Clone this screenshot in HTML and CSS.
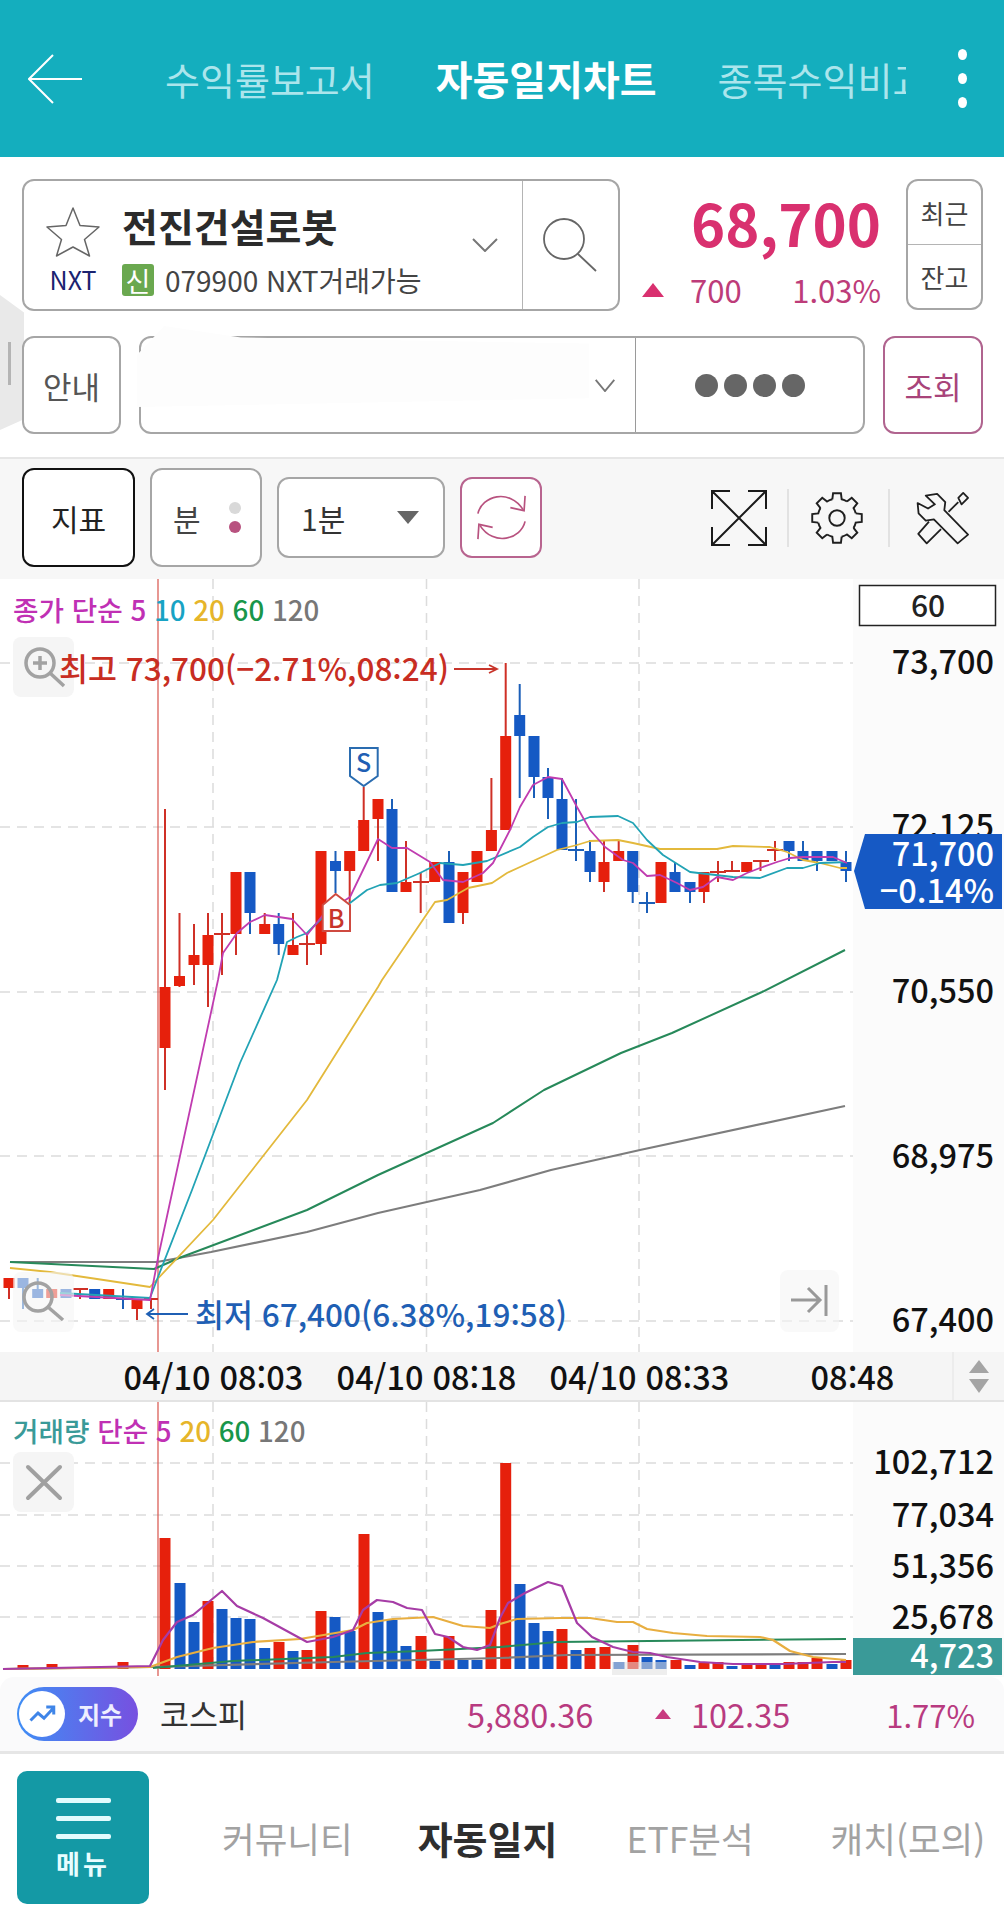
FILE: index.html
```html
<!DOCTYPE html>
<html lang="ko">
<head>
<meta charset="utf-8">
<title>자동일지차트</title>
<link rel="stylesheet" href="styles.css">
</head>
<body>
<div class="app">
  <header class="app-header">
    <svg class="back" viewBox="0 0 54 50"><path d="M54 25H1M25 1L1 25L25 49"/></svg>
    <nav class="tabs">
      <span class="tab">수익률보고서</span>
      <span class="tab tab-on">자동일지차트</span>
      <span class="tab">종목수익비교</span>
    </nav>
    <div class="kebab"><i></i><i></i><i></i></div>
  </header>

  <div class="side-handle"><i></i></div>

  <section class="stock-row">
    <div class="stock-box">
      <div class="stock-main">
        <svg class="star" viewBox="0 0 56 52"><path d="M28 2L35 19.500L54 21L39.500 33.500L44.500 50L28 41L11.500 50L16.500 33.500L2 21L21 19.500Z"/></svg>
        <div class="stock-name">전진건설로봇</div>
        <svg class="chev chev-a" viewBox="0 0 26 14"><path d="M1 1L13 13L25 1"/></svg>
        <div class="nxt">NXT</div>
        <div class="stock-meta"><span class="badge">신</span><span>079900 NXT거래가능</span></div>
      </div>
      <div class="stock-search">
        <svg viewBox="0 0 56 56"><circle cx="22" cy="22" r="20"/><path d="M36 37L54 54"/></svg>
      </div>
    </div>
    <div class="price-block">
      <div class="price">68,700</div>
      <div class="price-sub"><i class="tri tri-lg"></i><span class="diff">700</span><span class="pct">1.03%</span></div>
    </div>
    <div class="recent-box"><div>최근</div><div>잔고</div></div>
  </section>

  <section class="order-row">
    <div class="btn btn-info">안내</div>
    <div class="account">
      <div class="account-no">
        <i class="mask"></i>
        <svg class="chev chev-b" viewBox="0 0 22 14"><path d="M1 1L11 13L21 1"/></svg>
      </div>
      <div class="account-pw"><i></i><i></i><i></i><i></i></div>
    </div>
    <div class="btn btn-query">조회</div>
  </section>

  <section class="toolbar">
    <div class="tb tb-ind">지표</div>
    <div class="tb tb-min"><span>분</span><span class="dots"><i></i><i></i></span></div>
    <div class="tb tb-sel"><span>1분</span><i class="tri-down"></i></div>
    <div class="tb tb-ref">
      <svg viewBox="0 0 56 56"><path d="M4 24C8 6 36 -2 50 20"/><path d="M52 6L51 21L37 18"/><path d="M52 32C48 50 20 58 6 36"/><path d="M4 50L5 35L19 38"/></svg>
    </div>
    <div class="tb-icons">
      <svg class="ic-exp" viewBox="0 0 56 56"><path d="M1 19V1H19M37 1H55V19M1 37V55H19M37 55H55V37M1 1L55 55M55 1L1 55"/></svg>
      <i class="sep"></i>
      <svg class="ic-gear" viewBox="-28 -28 56 56">
        <circle r="8"/>
        <path id="tooth" d="M-4.840-19.400L-4.070-25.680H4.070L4.840-19.400A20 20 0 0 1 10.300-17.140"/>
        <use href="#tooth" transform="rotate(45)"/><use href="#tooth" transform="rotate(90)"/><use href="#tooth" transform="rotate(135)"/><use href="#tooth" transform="rotate(180)"/><use href="#tooth" transform="rotate(225)"/><use href="#tooth" transform="rotate(270)"/><use href="#tooth" transform="rotate(315)"/>
      </svg>
      <i class="sep"></i>
      <svg class="ic-tools" viewBox="672 28 172 172"><path d="M705 45L740 40L765 65L762 90L835 165L803 192L730 118L705 122L683 100L680 68L712 85L733 72Z"/><path d="M715 125L682 163L708 192L752 148"/><path d="M775 95L805 65"/><path d="M805 52L820 37L835 52L815 72Z"/></svg>
    </div>
  </section>

  <svg class="chart price-chart" viewBox="0 579 1004 773">
    <rect class="axis-bg" x="853" y="579" width="151" height="773"/>
    <path class="grid" d="M0 663H853M0 827H853M0 992H853M0 1156H853M0 1321H853M213 579V1352M426.500 579V1352M639 579V1352"/>
    <path class="cross" d="M158 579V1352"/>

    <rect class="ov-btn" x="13" y="637" width="61" height="60" rx="8"/>
    <g class="ov-ic"><circle cx="40" cy="663" r="14"/><path d="M50 673L64 686M33 663H47M40 656V670"/></g>

    <text class="legend" x="13" y="621"><tspan class="c-mag">종가 단순 5 </tspan><tspan class="c-cya">10 </tspan><tspan class="c-yel">20 </tspan><tspan class="c-grn">60 </tspan><tspan class="c-gry">120</tspan></text>

    <path class="wick-r" d="M165 809V1090M179.500 913V987M194 924V985M208 913V1007M222 913V975M214 934H230M236 934V955M264.700 913V934M293 913V955M307 934V965M299 944H315M321 944V955M349.700 871V903M363.700 787V851M378 819V861M406 841V882M420.700 872V913M413 882H429M463 913V924M491.400 778V830M505.700 663V736M604 840V892M618.700 840V851M704 892V903M718 861V882M710 872H726M732 861V871M724 871H740M760.500 861V871M753 861H769M775 841V861M767 850H783M9 1278V1299M80 1289V1299M73 1289H88M137 1300V1320M151 1299V1309M144 1299H158"/>
    <path class="body-r" d="M165 987V1048M179.500 976V986M194 955V965M208 935V965M236 872V934M264.700 924V934M293 945V955M321 851V944M349.700 851V871M363.700 820V851M378 799V819M406 882V892M434.700 862V882M463 872V913M477 851V882M491.400 830V851M505.700 736V830M604 862V882M618.700 851V861M661 862V903M704 872V892M746.700 862V872M9 1278V1288M51.700 1289V1298M108.700 1289V1299M137 1300V1309"/>
    <path class="wick-b" d="M250 913V934M278.700 913V955M335.500 851V893M392 799V809M449 851V862M519.700 684V798M534 777V798M548 768V819M562 778V799M576 799V861M568 850H584M590 840V882M632.700 892V903M647 892V913M639 903H655M675 862V872M690 892V903M789 851V861M803 841V851M817 861V871M846 851V882M23 1288V1309M37.700 1278V1289M123 1289V1309M116 1299H131"/>
    <path class="body-b" d="M250 872V913M278.700 924V944M335.500 861V871M392 809V892M449 862V923M519.700 715V736M534 736V777M548 777V798M562 799V850M590 851V872M632.700 851V892M675 872V892M690 882V892M789 841V851M803 851V861M817 851V861M832 851V861M846 862V871M23 1278V1288M37.700 1289V1298M66 1289V1298M94.700 1289V1299"/>

    <polyline class="ma s-gry" points="10,1262 157,1262 211,1252 307,1232 378,1213 480,1190 551,1170 640,1150 845,1106"/>
    <polyline class="ma s-grn" points="10,1262 154,1269 179,1258 307,1210 378,1175 493,1123 544,1090 621,1053 672,1033 762,992 845,950"/>
    <polyline class="ma s-yel" points="10,1268 50,1272 97,1279 150,1287 213,1220 307,1100 378,987 382,980 435,902 447,900 468,888 492,883 507,873 520,867 557,850 577,845 590,841 618,840 633,843 660,849 717,849 733,846 770,847 787,852 803,860 820,863 840,868 847,868"/>
    <polyline class="ma s-cya" points="60,1293 150,1298 158,1277 192,1190 240,1063 277,980 287,942 297,937 307,933 323,917 350,903 367,890 380,885 397,883 420,873 440,863 463,865 487,861 520,847 533,837 548,827 562,823 577,822 590,817 618,816 633,823 647,840 663,855 690,872 707,874 733,877 760,878 787,868 803,868 820,863 847,862"/>
    <polyline class="ma s-mag" points="60,1295 150,1300 158,1258 218,980 223,953 237,933 250,922 265,915 292,919 307,935 323,915 350,897 378,839 392,848 407,848 430,862 443,880 463,882 483,873 493,863 510,830 520,807 533,785 548,777 562,779 577,807 590,830 605,847 623,860 633,863 647,876 660,875 677,883 690,890 703,887 717,877 733,880 747,873 760,868 777,862 790,858 803,857 820,857 833,857 847,863"/>

    <path class="mark-s" d="M350 748H377.700V776L363.700 786L350 776Z"/>
    <text class="mark-t t-blue" x="363.700" y="772">S</text>
    <path class="mark-b" d="M322.700 905L335.700 894L350 905V931H322.700Z"/>
    <text class="mark-t t-red" x="336" y="928">B</text>

    <text class="note t-hi" x="59" y="681">최고 73,700(−2.71%,08:24)</text>
    <path class="arrow-r" d="M454 669H497M489 665L497 669L489 673"/>
    <text class="note t-lo" x="195" y="1327">최저 67,400(6.38%,19:58)</text>
    <path class="arrow-b" d="M147 1314H188M154 1309L147 1314L154 1319"/>

    <rect class="ov-btn ov-fade" x="13" y="1272" width="61" height="60" rx="8"/>
    <g class="ov-ic"><circle cx="38" cy="1297" r="14"/><path d="M48 1307L63 1320"/></g>
    <rect class="ov-btn ov-fade" x="780" y="1270" width="59" height="62" rx="8"/>
    <path class="ov-end" d="M791 1300H820M808 1288L820 1300L808 1312M826 1285V1316"/>

    <rect class="box60" x="859.500" y="585.500" width="136" height="40"/>
    <text class="axis-c" x="928" y="617">60</text>
    <text class="axis" x="994" y="674">73,700</text>
    <text class="axis" x="994" y="838">72,125</text>
    <text class="axis" x="994" y="1003">70,550</text>
    <text class="axis" x="994" y="1168">68,975</text>
    <text class="axis" x="994" y="1332">67,400</text>
    <path class="now-bg" d="M854 871L865 834H1002V909H865Z"/>
    <text class="axis t-white" x="994" y="866">71,700</text>
    <text class="axis t-white" x="994" y="903">−0.14%</text>
  </svg>

  <div class="time-axis">
    <span class="tick">04/10 08:03</span>
    <span class="tick">04/10 08:18</span>
    <span class="tick">04/10 08:33</span>
    <span class="tick">08:48</span>
    <div class="stepper"><i class="st-up"></i><i class="st-down"></i></div>
  </div>

  <svg class="chart vol-chart" viewBox="0 1402 1004 275">
    <rect class="axis-bg" x="853" y="1402" width="151" height="275"/>
    <path class="grid" d="M0 1463H853M0 1515H853M0 1566H853M0 1617H853M213 1402V1672M426.500 1402V1672M639 1402V1672"/>
    <path class="cross" d="M158 1402V1676"/>
    <rect class="ov-btn" x="13" y="1452" width="61" height="60" rx="8"/>
    <path class="ov-x" d="M28 1467L60 1498M60 1467L28 1498"/>
    <text class="legend" x="13" y="1442"><tspan class="c-teal">거래량 </tspan><tspan class="c-mag">단순 5 </tspan><tspan class="c-yel">20 </tspan><tspan class="c-grn">60 </tspan><tspan class="c-gry">120</tspan></text>

    <path class="body-r" d="M165 1538V1669M208 1601V1669M279 1642V1669M307 1650V1669M321 1611V1669M364 1534V1669M421 1636V1669M449 1636V1669M491 1610V1669M505.700 1463V1669M562 1629V1669M590 1648V1669M605 1647V1669M633 1645V1669M676 1660V1669M704 1663V1669M718 1662V1669M747 1664V1669M761 1664V1669M789 1662V1669M803 1662V1669M817 1658V1669M846 1660V1669M23 1665V1669M52 1664V1669M123 1662V1669"/>
    <path class="body-b" d="M180 1583V1669M194 1622V1669M222 1609V1669M236 1618V1669M250 1619V1669M264.700 1648V1669M293 1651V1669M335 1617V1669M350 1631V1669M378 1612V1669M392 1620V1669M406 1646V1669M435 1661V1669M463 1660V1669M477 1660V1669M520 1584V1669M534 1623V1669M548 1631V1669M576 1650V1669M619 1662V1669M647 1657V1669M661 1660V1669M690 1665V1669M732 1666V1669M775 1664V1669M832 1664V1669"/>

    <polyline class="ma s-gry" points="3,1669 153,1667 333,1662 500,1658 567,1655 846,1654"/>
    <polyline class="ma s-grn" points="153,1668 233,1661 333,1657 367,1653 420,1651 500,1647 557,1642 846,1639"/>
    <polyline class="ma s-org" points="3,1669 150,1667 177,1657 213,1648 253,1642 300,1639 353,1630 367,1623 393,1619 433,1617 463,1626 490,1628 500,1624 517,1619 560,1618 590,1618 617,1622 633,1622 647,1629 673,1633 707,1636 760,1637 773,1640 790,1651 813,1657 846,1660"/>
    <polyline class="ma s-pur" points="3,1669 150,1666 163,1640 177,1622 193,1615 222,1591 237,1606 263,1618 307,1642 333,1637 353,1630 363,1610 377,1600 393,1602 407,1608 422,1610 435,1634 448,1637 463,1647 477,1650 490,1645 500,1618 508,1603 525,1593 548,1582 562,1586 577,1623 592,1637 613,1647 633,1652 650,1653 667,1657 700,1662 733,1664 783,1664 833,1662 846,1662"/>
    <rect class="scroll-h" x="612" y="1662" width="55" height="13"/>

    <text class="axis" x="994" y="1474">102,712</text>
    <text class="axis" x="994" y="1527">77,034</text>
    <text class="axis" x="994" y="1578">51,356</text>
    <text class="axis" x="994" y="1629">25,678</text>
    <rect class="vol-now" x="853" y="1638" width="149" height="37"/>
    <text class="axis t-white" x="994" y="1668">4,723</text>
  </svg>

  <section class="index-bar">
    <div class="pill">
      <span class="pill-ic"><svg viewBox="0 0 36 28"><path d="M2 22L12 12L20 19L33 5M23 4H33V14"/></svg></span>
      <span class="pill-t">지수</span>
    </div>
    <div class="idx-name">코스피</div>
    <div class="idx-val">5,880.36</div>
    <div class="idx-chg"><i class="tri tri-sm"></i><span>102.35</span></div>
    <div class="idx-pct">1.77%</div>
  </section>

  <footer class="bottom-nav">
    <div class="menu-btn"><i></i><i></i><i></i><span>메뉴</span></div>
    <nav class="bn-tabs">
      <span>커뮤니티</span>
      <span class="bn-on">자동일지</span>
      <span>ETF분석</span>
      <span>캐치(모의)</span>
    </nav>
  </footer>
</div>
</body>
</html>
```
FILE: styles.css
```css
* { box-sizing: border-box; }
html, body { margin: 0; padding: 0; background: #fff; }
body { font-family: "Noto Sans CJK KR", "Noto Sans", sans-serif; line-height: 1; color: #333; }
i { display: block; }
svg { display: block; fill: none; }
.app { position: relative; width: 1004px; height: 1920px; overflow: hidden; background: #fff; }

/* header */
.app-header { height: 157px; background: #14aebe; display: flex; align-items: center; padding-left: 28px; }
.back { width: 54px; height: 50px; stroke: #fff; stroke-width: 2; }
.tabs { margin-left: 83px; width: 741px; display: flex; gap: 61px; overflow: hidden; white-space: nowrap; }
.tab { font-size: 38px; color: #abe5ec; flex: none; line-height: 1.5; }
.tab-on { font-size: 40px; font-weight: 700; color: #fff; line-height: 57px; }
.kebab { margin-left: 52px; display: flex; flex-direction: column; gap: 13px; }
.kebab i { width: 9px; height: 11px; border-radius: 50%; background: #fff; }

.side-handle { position: absolute; left: 0; top: 295px; width: 24px; height: 135px; background: #e9e9e9; clip-path: polygon(0 0, 100% 13%, 100% 92%, 0 100%); }
.side-handle i { position: absolute; left: 8px; top: 47px; width: 3px; height: 43px; background: #b4b4b4; }

/* stock row */
.stock-row { position: relative; margin-top: 22px; height: 132px; padding-left: 22px; display: flex; }
.stock-box { width: 598px; height: 132px; border: 2px solid #a6a6a6; border-radius: 12px; display: flex; background: #fff; }
.stock-main { width: 498px; display: grid; grid-template-columns: 98px 350px 50px; grid-template-rows: 86px 1fr; }
.star { width: 56px; height: 52px; justify-self: center; align-self: end; margin-bottom: 9px; stroke: #666; stroke-width: 1.500; stroke-linejoin: round; }
.stock-name { font-size: 39px; font-weight: 700; color: #2b2b2b; align-self: center; margin-top: 2px; }
.chev { stroke: #777; stroke-width: 2; }
.chev-a { grid-column: 3; grid-row: 1 / 3; width: 26px; height: 14px; align-self: center; }
.nxt { font-size: 25px; color: #1b2370; justify-self: center; margin-top: 0; }
.stock-meta { display: flex; align-items: center; font-size: 28px; color: #444; white-space: nowrap; gap: 11px; margin-top: -3px; align-self: start; }
.badge { width: 32px; height: 32px; background: #6aa84f; color: #fff; border-radius: 3px; font-size: 27px; display: flex; align-items: center; justify-content: center; }
.stock-search { flex: 1; border-left: 1px solid #b4b4b4; display: flex; align-items: center; justify-content: center; }
.stock-search svg { width: 56px; height: 56px; stroke: #666; stroke-width: 1.800; margin-left: -2px; }

.price-block { width: 239px; margin-left: 22px; }
.price { font-size: 58px; font-weight: 700; color: #d9306f; text-align: right; padding-right: 0; margin-top: 13px; line-height: 60px; }
.price-sub { display: flex; align-items: center; margin-top: 22px; font-size: 31px; color: #bd3c79; }
.tri { border-style: solid; border-color: transparent; border-top-width: 0; }
.tri-lg { border-width: 0 11px 14px; border-bottom-color: #d9306f; }
.diff { margin-left: 26px; }
.pct { margin-left: auto; }
.recent-box { width: 77px; height: 131px; margin-left: 25px; border: 2px solid #a6a6a6; border-radius: 12px; display: flex; flex-direction: column; font-size: 26px; color: #444; }
.recent-box div { flex: 1; display: flex; align-items: center; justify-content: center; }
.recent-box div + div { border-top: 1px solid #b4b4b4; }

/* order row */
.order-row { position: relative; margin-top: 25px; height: 98px; padding: 0 21px 0 22px; display: flex; gap: 18px; }
.btn { width: 99px; border: 2px solid #a6a6a6; border-radius: 12px; display: flex; align-items: center; justify-content: center; font-size: 31px; color: #555; background: #fff; }
.btn-query { width: 100px; border-color: #b0648f; color: #a8447a; }
.account { width: 726px; border: 2px solid #a6a6a6; border-radius: 12px; display: flex; background: #fff; }
.account-no { position: relative; width: 495px; border-right: 1px solid #9a9a9a; }
.mask { position: absolute; left: -4px; top: -12px; width: 452px; height: 88px; background: #fdfdfd; clip-path: polygon(6% 0, 23% 13%, 100% 20%, 100% 82%, 0 92%, 0 33%); }
.chev-b { position: absolute; left: 453px; top: 41px; width: 22px; height: 13px; }
.account-pw { flex: 1; display: flex; align-items: center; justify-content: center; gap: 6px; }
.account-pw i { width: 23px; height: 23px; border-radius: 50%; background: #666; }

/* toolbar */
.toolbar { margin-top: 23px; height: 122px; background: #f7f7f7; border-top: 2px solid #e6e6e6; display: flex; align-items: center; padding: 0 0 3px 22px; gap: 15px; }
.tb { background: #fff; border: 2px solid #a6a6a6; border-radius: 12px; display: flex; align-items: center; font-size: 30px; color: #444; flex: none; }
.tb-ind { width: 113px; height: 99px; border-color: #111; color: #222; justify-content: center; }
.tb-min { width: 112px; height: 99px; padding-left: 21px; }
.dots { margin-left: 28px; display: flex; flex-direction: column; gap: 7px; }
.dots i { width: 12px; height: 12px; border-radius: 50%; background: #d9d9d9; }
.dots i + i { background: #b8527f; }
.tb-sel { width: 168px; height: 81px; padding-left: 22px; color: #333; }
.tri-down { margin-left: 52px; width: 0; height: 0; border-style: solid; border-width: 13px 11px 0; border-color: #666 transparent transparent; }
.tb-ref { width: 82px; height: 81px; border-color: #b8648f; justify-content: center; }
.tb-ref svg { width: 55px; height: 55px; stroke: #b8527f; stroke-width: 1.700; }
.tb-icons { margin-left: auto; padding-right: 33px; display: flex; align-items: center; }
.sep { width: 2px; height: 58px; background: #e2e2e2; }
.ic-exp { width: 56px; height: 56px; stroke: #1a1a1a; stroke-width: 2; margin-right: 20px; }
.ic-gear { width: 54px; height: 54px; margin: 0 24px 0 21px; stroke: #1f1f1f; stroke-width: 2; }
.ic-tools { width: 56px; height: 56px; margin-left: 25px; stroke: #1f1f1f; stroke-width: 5.500; stroke-linejoin: round; }

/* charts */
.chart { width: 1004px; }
.price-chart { height: 773px; }
.vol-chart { height: 275px; }
.axis-bg { fill: #fbfbfb; }
.grid { stroke: #dcdcdc; stroke-width: 1.500; stroke-dasharray: 10 7; }
.cross { stroke: #d8534a; stroke-width: 1.200; }
.wick-r { stroke: #cf3026; stroke-width: 2; }
.wick-b { stroke: #1b5fb8; stroke-width: 2; }
.body-r { stroke: #e6200c; stroke-width: 11; }
.body-b { stroke: #1559c4; stroke-width: 11; }
.ma { fill: none; stroke-width: 1.800; stroke-linejoin: round; }
.s-gry { stroke: #7d7d7d; stroke-width: 2.200; }
.s-grn { stroke: #27895a; stroke-width: 2; }
.s-yel { stroke: #e3b93c; }
.s-org { stroke: #e8ae40; stroke-width: 2.200; }
.s-cya { stroke: #22a3b5; }
.s-mag { stroke: #c03cb0; }
.s-pur { stroke: #a63ca6; stroke-width: 2.200; }
.legend { font-size: 27.700px; font-weight: 500; }
.c-mag { fill: #c030b4; }
.c-cya { fill: #18a3c4; }
.c-yel { fill: #e6b52a; }
.c-grn { fill: #18964a; }
.c-gry { fill: #777; }
.c-teal { fill: #3a9a98; }
.ov-btn { fill: #f5f5f5; }
.ov-fade { fill-opacity: .6; }
.ov-ic { stroke: #a2a2a2; stroke-width: 3.500; fill: none; }
.ov-end { stroke: #999; stroke-width: 3; fill: none; }
.ov-x { stroke: #a0a0a0; stroke-width: 4; stroke-linecap: round; }
.mark-s { fill: #fff; stroke: #2a6cb0; stroke-width: 2; }
.mark-b { fill: #fff; stroke: #cf4a40; stroke-width: 2; }
.mark-t { font-size: 25px; font-weight: 500; text-anchor: middle; }
.t-blue { fill: #1f5fb4; }
.t-red { fill: #c8352b; }
.note { font-size: 31.500px; font-weight: 500; }
.t-hi { fill: #c82d22; }
.t-lo { fill: #1f5fb4; }
.arrow-r { stroke: #c8352b; stroke-width: 1.800; fill: none; }
.arrow-b { stroke: #1f5fb4; stroke-width: 1.800; fill: none; }
.box60 { fill: #fff; stroke: #222; stroke-width: 1.500; }
.axis { font-size: 32.500px; font-weight: 500; fill: #111; text-anchor: end; }
.axis-c { font-size: 30px; font-weight: 500; fill: #222; text-anchor: middle; }
.t-white { fill: #fff; }
.now-bg { fill: #1659c4; }
.vol-now { fill: #3a9a98; }
.scroll-h { fill: #e0e0e0; fill-opacity: .55; }

/* time axis */
.time-axis { height: 50px; background: #f5f5f5; display: flex; align-items: center; padding-left: 107px; border-bottom: 2px solid #e3e3e3; }
.tick { width: 213px; text-align: center; font-size: 32.500px; font-weight: 500; color: #111; white-space: nowrap; }
.stepper { margin-left: -7px; width: 51px; height: 100%; border-left: 2px solid #ececec; display: flex; flex-direction: column; align-items: center; justify-content: center; gap: 6px; }
.st-up { border-style: solid; border-width: 0 10px 13px; border-color: transparent transparent #a4a4a4; }
.st-down { border-style: solid; border-width: 14px 10px 0; border-color: #a4a4a4 transparent transparent; }

/* index bar */
.index-bar { height: 77px; background: #fafafb; border-radius: 14px 14px 0 0; border-bottom: 3px solid #e6e6e6; display: flex; align-items: center; padding-left: 17px; }
.pill { width: 121px; height: 54px; border-radius: 27px; background: linear-gradient(90deg, #3f8ef5, #7750e0); display: flex; align-items: center; padding-left: 2px; flex: none; }
.pill-ic { width: 46px; height: 46px; border-radius: 50%; background: #fff; display: flex; align-items: center; justify-content: center; }
.pill-ic svg { width: 27px; height: 21px; stroke: #3f85e8; stroke-width: 4; }
.pill-t { margin-left: 13px; font-size: 24px; font-weight: 700; color: #eef; }
.idx-name { margin-left: 22px; width: 307px; font-size: 31.500px; color: #333; }
.idx-val { width: 127px; font-size: 32.500px; color: #b83a80; white-space: nowrap; }
.idx-chg { margin-left: 61px; display: flex; align-items: center; font-size: 32.500px; color: #b83a80; }
.tri-sm { border-width: 0 8px 10px; border-bottom-color: #c83a80; margin-right: 20px; }
.idx-pct { margin-left: auto; padding-right: 29px; font-size: 31px; color: #b83a80; }

/* bottom nav */
.bottom-nav { height: 166px; display: flex; background: #fff; padding: 17px 22px 0 17px; }
.menu-btn { width: 132px; height: 133px; background: #1499a5; border-radius: 10px; display: flex; flex-direction: column; align-items: center; padding-top: 27px; flex: none; }
.menu-btn i { width: 55px; height: 5px; border-radius: 2px; background: #e2fbfd; margin-bottom: 13px; }
.menu-btn span { margin-top: -2px; font-size: 26px; letter-spacing: 3px; font-weight: 700; color: #e8fdff; }
.bn-tabs { flex: 1; margin-left: 73px; height: 133px; display: flex; align-items: center; font-size: 35.500px; color: #a2a2a2; white-space: nowrap; }
.bn-on { font-size: 38px; font-weight: 700; color: #2e2e2e; margin: 0 69px 0 65px; }
.bn-tabs span:last-child { margin-left: 77px; }
```
